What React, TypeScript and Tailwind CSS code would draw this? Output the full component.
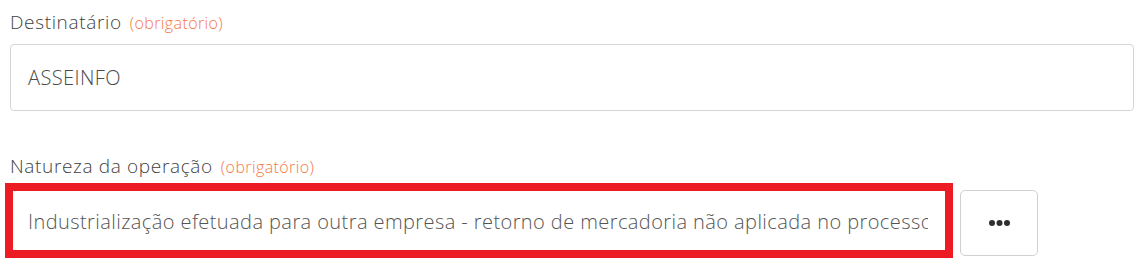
export default function App() {
  return (
    <div className="min-h-[262px] w-[1140px] bg-white pl-[10px] pr-[6px] pt-[9px] font-['Open_Sans',sans-serif] font-light">
      <div className="flex flex-col">
        <label className="mb-[8px] flex items-baseline gap-[8px] text-[19px] leading-[26px] tracking-[0.65px] text-[#3f3f3f]">
          Destinatário
          <span className="text-[16px] tracking-[0.4px] text-[#f4794a]">(obrigatório)</span>
        </label>
        <div className="flex h-[67px] items-center rounded-[4px] border border-[#d5d5d5] bg-white px-[17px] text-[20px] tracking-[0.42px] text-[#4a4a4a]">
          ASSEINFO
        </div>
      </div>

      <div className="mt-[42px] flex flex-col">
        <label className="mb-[8px] flex items-baseline gap-[8px] text-[19px] leading-[26px] tracking-[0.65px] text-[#3f3f3f]">
          Natureza da operação
          <span className="text-[16px] tracking-[0.4px] text-[#f4794a]">(obrigatório)</span>
        </label>
        <div className="flex items-start gap-[14px]">
          <div className="relative w-[936px]">
            <div className="flex h-[67px] items-center overflow-hidden whitespace-nowrap rounded-[4px] border border-[#d5d5d5] bg-white pl-[17px] pr-[17px] text-[20px] tracking-[0.42px] text-[#555]">
              <span className="block overflow-hidden">
                Industrialização efetuada para outra empresa - retorno de mercadoria não aplicada no processo produtivo
              </span>
            </div>
            <div className="pointer-events-none absolute left-[-5px] right-[-7px] top-[-5px] bottom-[-3px] border-[8px] border-[#ed1c24]" />
          </div>
          <button className="mt-[2px] flex h-[66px] w-[78px] items-center justify-center rounded-[5px] border border-[#d0d0d0] bg-white">
            <svg width="21" height="6" viewBox="0 0 21 6">
              <circle cx="3" cy="3" r="3" fill="#2f2f2f" />
              <circle cx="10.5" cy="3" r="3" fill="#2f2f2f" />
              <circle cx="18" cy="3" r="3" fill="#2f2f2f" />
            </svg>
          </button>
        </div>
      </div>
    </div>
  );
}
